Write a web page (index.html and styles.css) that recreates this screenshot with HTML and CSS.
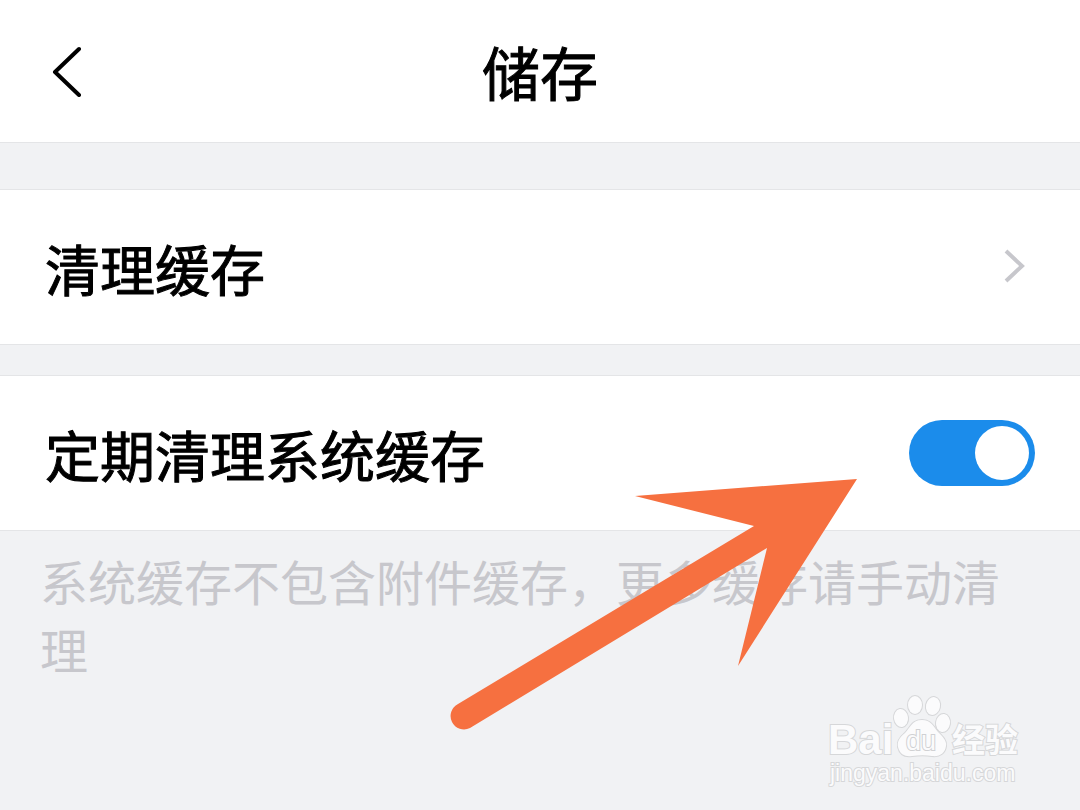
FILE: index.html
```html
<!DOCTYPE html>
<html lang="zh-CN">
<head>
    <meta charset="UTF-8">
    <meta name="viewport" content="width=device-width, initial-scale=1.0">
    <title>储存</title>
    <link rel="stylesheet" href="styles.css">
</head>
<body>
    <div class="page">
        <header class="header">
            <button class="back-button" type="button" aria-label="返回">
                <svg width="32" height="52" viewBox="0 0 32 52" fill="none" stroke="currentColor" stroke-width="4" stroke-linecap="round" stroke-linejoin="round">
                    <path d="M28 4L4 27l24 23"></path>
                </svg>
            </button>
            <h1 class="title">储存</h1>
        </header>

        <main>
            <a class="row" href="#clear">
                <span class="row-label">清理缓存</span>
                <svg class="chevron" width="22" height="36" viewBox="0 0 22 36" fill="none" stroke="currentColor" stroke-width="4">
                    <path d="M2 2l16 15L2 32"></path>
                </svg>
            </a>

            <div class="row">
                <label class="row-label" for="autoClear">定期清理系统缓存</label>
                <input class="switch" type="checkbox" id="autoClear" checked>
            </div>

            <p class="hint">系统缓存不包含附件缓存，更多缓存请手动清理</p>
        </main>

        <svg class="arrow" width="410" height="252" viewBox="0 0 410 252">
            <path d="M407 1L185 18l119 30L8 226a13 13 0 0 0 12 24L317 70l-29 118z"></path>
        </svg>

        <svg class="watermark" width="200" height="100" viewBox="0 0 200 100">
            <text class="brand" x="3" y="62">Bai</text>
            <g class="paw">
                <ellipse cx="76" cy="26" rx="7" ry="9" transform="rotate(-8 76 26)"></ellipse>
                <ellipse cx="90" cy="13" rx="7" ry="9"></ellipse>
                <ellipse cx="108" cy="14" rx="7" ry="9" transform="rotate(12 108 14)"></ellipse>
                <ellipse cx="118" cy="31" rx="7" ry="9" transform="rotate(8 118 31)"></ellipse>
                <path d="M97 28c-10 0-12 8-17 13-6 5-8 9-7 14 2 8 8 10 14 9 7-1 14-1 20 0 8 1 13-3 14-10 1-5-3-9-8-14-5-6-7-12-16-12z"></path>
            </g>
            <text class="brand-du" x="81" y="58">du</text>
            <text class="brand-cn" x="127" y="60">经验</text>
            <text class="site" x="5" y="89">jingyan.baidu.com</text>
        </svg>
    </div>
</body>
</html>
```
FILE: styles.css
```css
* {
    box-sizing: border-box;
    margin: 0;
    padding: 0;
}

body {
    background-color: #f1f2f4;
    color: #000000;
    font-family: "Noto Sans CJK SC", sans-serif;
}

.page {
    position: relative;
    min-height: 100vh;
    overflow: hidden;
}

.header {
    display: grid;
    grid-template-columns: 1fr auto 1fr;
    align-items: center;
    height: 143px;
    padding: 0 51px;
    background-color: #ffffff;
    border-bottom: 1px solid #e4e5e7;
    margin-bottom: 46px;
}

.back-button {
    justify-self: start;
    border: none;
    background: none;
    color: inherit;
    cursor: pointer;
}

.back-button svg,
.chevron {
    display: block;
}

.title {
    font-size: 58px;
    font-weight: 400;
    line-height: 80px;
    -webkit-text-stroke: 1px currentColor;
}

.row {
    display: flex;
    align-items: center;
    justify-content: space-between;
    height: 156px;
    padding: 0 45px;
    background-color: #ffffff;
    border-top: 1px solid #e4e5e7;
    border-bottom: 1px solid #e4e5e7;
    color: inherit;
    text-decoration: none;
}

.row + .row {
    margin-top: 30px;
}

.row-label {
    font-size: 55px;
    line-height: 80px;
    -webkit-text-stroke: 1px currentColor;
}

.chevron {
    color: #c7c7cc;
    margin-right: 9px;
}

.switch {
    appearance: none;
    width: 126px;
    height: 66px;
    padding: 6px;
    border-radius: 33px;
    background-color: #c7c7cc;
    cursor: pointer;
}

.switch::before {
    content: "";
    display: block;
    width: 54px;
    height: 54px;
    border-radius: 50%;
    background-color: #ffffff;
}

.switch:checked {
    background-color: #1b8ceb;
}

.switch:checked::before {
    margin-left: auto;
}

.hint {
    padding: 15px 40px;
    font-size: 48px;
    line-height: 68px;
    color: #c7c7cc;
}

/* 指向开关的箭头 */
.arrow {
    position: absolute;
    top: 478px;
    right: 220px;
    fill: #f67040;
    pointer-events: none;
}

/* 右下角水印 */
.watermark {
    position: absolute;
    right: 55px;
    bottom: 18px;
    fill: #fbfbfc;
    stroke: #d6d7d9;
    stroke-width: 2px;
    paint-order: stroke;
    pointer-events: none;
}

.brand {
    font-family: "Liberation Sans", Arial, sans-serif;
    font-size: 42px;
    font-weight: 700;
}

.brand-du {
    font-family: "Liberation Sans", Arial, sans-serif;
    font-size: 27px;
    stroke: #d0d1d3;
}

.brand-cn {
    font-size: 33px;
    font-weight: 700;
}

.site {
    font-family: "Liberation Sans", Arial, sans-serif;
    font-size: 23px;
}
```
